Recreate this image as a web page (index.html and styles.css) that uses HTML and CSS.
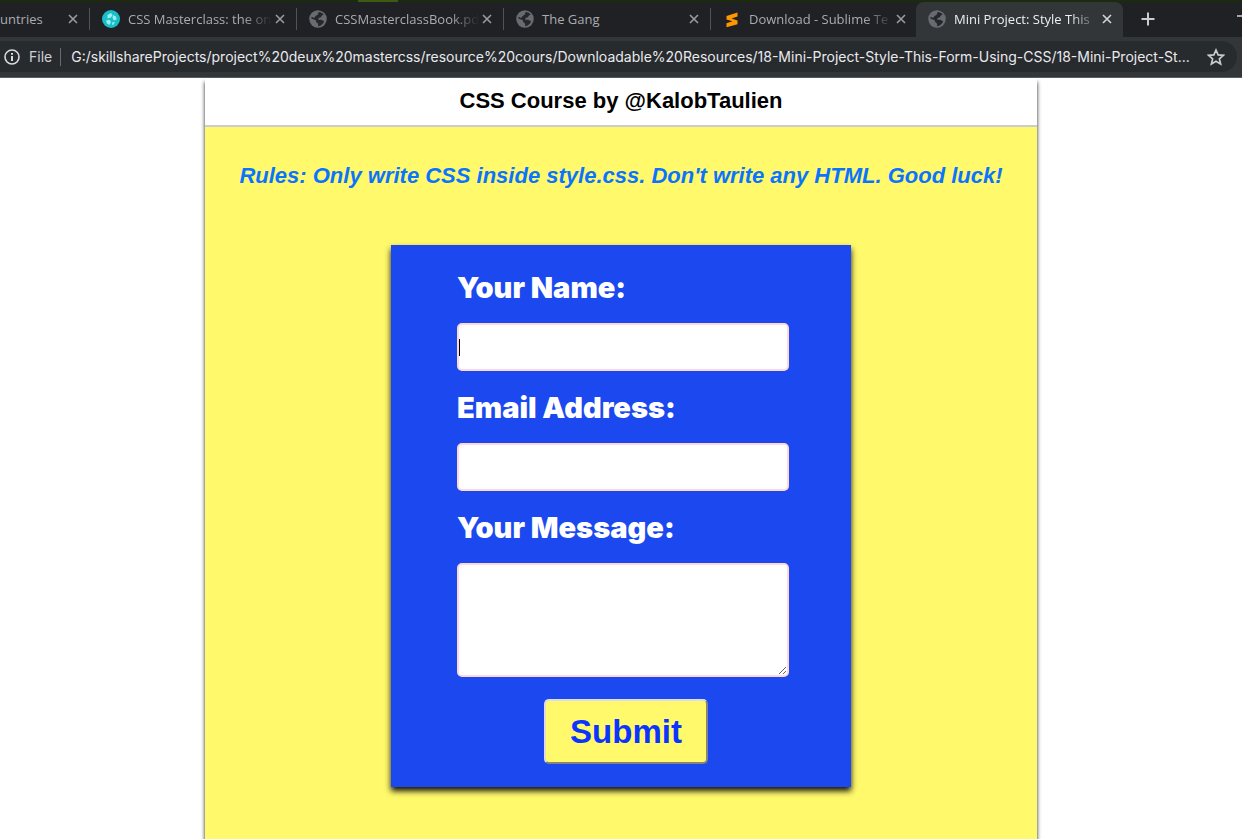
FILE: index.html
```html
<!DOCTYPE html>
<html lang="en">
<head>
    <meta charset="utf-8">
    <title>Mini Project: Style This Form</title>
    <link rel="stylesheet" href="styles.css">
</head>
<body>
    <!-- shared icons -->
    <svg class="defs" width="0" height="0" aria-hidden="true">
        <symbol id="globe" viewBox="0 0 16 16">
            <circle cx="8" cy="8" r="7.8" fill="#686c70"/>
            <path d="M8.600 1.800C10.500 2 12 2.700 13 4l-1.500.8-1 1.600-2 .6-.3 1.600h2.600l2.600 1.500-.8 1.700-2.200 2-2.400.7.200-2.300-1.700-1.300-.5-1.700-3.900-1.700.2-1.500L4.500 7l1.400-1.700 1.800-1z" fill="#25272b"/>
        </symbol>
        <symbol id="close" viewBox="0 0 10 10">
            <path d="M1 1l8 8M9 1l-8 8" fill="none" stroke="currentColor" stroke-width="1.600"/>
        </symbol>
    </svg>

    <div class="browser">
        <div class="desktop"><span class="desktop-bit"></span></div>
        <div class="tabs">
            <div class="tab tab-first">
                <span class="tab-title">untries</span>
                <button class="tab-close" aria-label="Close tab"><svg><use href="#close"/></svg></button>
            </div>
            <div class="tab">
                <svg class="favicon" viewBox="0 0 18 18">
                    <circle cx="9" cy="9" r="9" fill="#18bfc9"/>
                    <path d="M5.500 5L9 3l1.500 2L9 7.500 5.500 8.500zM11 5l3 1.500.5 3-2.500 1-1.500-2.500zM4 10.500l3.500-.8L9 12l-1.500 3-2.500-1.500zM10.500 12l2.500.5-1.500 2-1.500.5z" fill="#9aeef0"/>
                </svg>
                <span class="tab-title fade">CSS Masterclass: the on</span>
                <button class="tab-close" aria-label="Close tab"><svg><use href="#close"/></svg></button>
            </div>
            <div class="tab">
                <svg class="favicon"><use href="#globe"/></svg>
                <span class="tab-title fade">CSSMasterclassBook.pd</span>
                <button class="tab-close" aria-label="Close tab"><svg><use href="#close"/></svg></button>
            </div>
            <div class="tab">
                <svg class="favicon"><use href="#globe"/></svg>
                <span class="tab-title">The Gang</span>
                <button class="tab-close" aria-label="Close tab"><svg><use href="#close"/></svg></button>
            </div>
            <div class="tab tab-last">
                <svg class="favicon" viewBox="0 0 18 18">
                    <path d="M3.500 6L14.500 2.500v4L8.500 8.400l6 2v3.800L3.500 17.200v-4l6-1.900-6-1.800z" fill="#ff9800"/>
                </svg>
                <span class="tab-title fade">Download - Sublime Te</span>
                <button class="tab-close" aria-label="Close tab"><svg><use href="#close"/></svg></button>
            </div>
            <div class="tab tab-active">
                <svg class="favicon"><use href="#globe"/></svg>
                <span class="tab-title fade">Mini Project: Style This</span>
                <button class="tab-close" aria-label="Close tab"><svg><use href="#close"/></svg></button>
            </div>
            <button class="new-tab" aria-label="New tab">
                <svg viewBox="0 0 14 14"><path d="M7 .5v13M.5 7h13" stroke="#c9ccd0" stroke-width="2"/></svg>
            </button>
            <button class="minimize" aria-label="Minimize"></button>
        </div>
        <div class="toolbar">
            <div class="omnibox">
                <svg class="info" viewBox="0 0 16 16">
                    <circle cx="8" cy="8" r="7" fill="none" stroke="#d8dadd" stroke-width="1.600"/>
                    <path d="M8 7v5M8 4v1.800" stroke="#d8dadd" stroke-width="2"/>
                </svg>
                <span class="scheme">File</span>
                <span class="url">G:/skillshareProjects/project%20deux%20mastercss/resource%20cours/Downloadable%20Resources/18-Mini-Project-Style-This-Form-Using-CSS/18-Mini-Project-St...</span>
                <button class="star" aria-label="Bookmark this page">
                    <svg viewBox="0 0 16 16"><path d="M8 1.800l1.900 4.300 4.600.4-3.500 3.100 1.100 4.600L8 11.700l-4.100 2.500L5 9.600 1.500 6.500l4.600-.4z" fill="none" stroke="#c8cbce" stroke-width="1.500"/></svg>
                </button>
            </div>
        </div>

        <main class="container">
            <h1>CSS Course by @KalobTaulien</h1>
            <p class="rules">Rules: Only write CSS inside style.css. Don't write any HTML. Good luck!</p>
            <form class="card">
                <label for="name">Your Name:</label>
                <div class="field">
                    <input type="text" id="name">
                    <span class="caret"></span>
                </div>
                <label for="email">Email Address:</label>
                <div class="field">
                    <input type="email" id="email">
                </div>
                <label for="message">Your Message:</label>
                <textarea id="message"></textarea>
                <button type="submit" class="submit">Submit</button>
            </form>
        </main>
    </div>
</body>
</html>
```

FILE: styles.css
```css
* {
    box-sizing: border-box;
}

body {
    margin: 0;
    background: #fff;
    font-family: "Liberation Sans", Arial, sans-serif;
}

button {
    padding: 0;
    border: none;
    background: none;
    cursor: pointer;
}

.defs {
    position: absolute;
}

.browser {
    display: flex;
    flex-direction: column;
    min-height: 100vh;
}

/* browser chrome */
.desktop {
    display: flex;
    height: 2px;
    background: #1c2b0d;
}

.desktop-bit {
    width: 40px;
    margin-left: 358px;
    background: #3b5c10;
}

.tabs {
    display: flex;
    align-items: flex-start;
    height: 35px;
    background: #202124;
    font-family: "Open Sans", "Noto Sans", sans-serif;
    font-size: 13px;
    line-height: 20px;
    color: #a9acb0;
}

.tab {
    display: flex;
    flex: 0 1 207px;
    align-items: center;
    height: 22px;
    min-width: 0;
    margin-top: 6px;
    padding: 0 11px 0 12px;
    border-right: 1px solid #505357;
}

.tab-first {
    flex-basis: 90px;
    padding-left: 0;
}

.tab-last {
    border-right-color: transparent;
}

.tab-active {
    height: 35px;
    margin: 0 0 0 -2px;
    padding-bottom: 1px;
    border: none;
    border-radius: 8px 8px 0 0;
    background: #323639;
    color: #eceef0;
}

.favicon {
    flex: none;
    width: 18px;
    height: 18px;
    margin-right: 8px;
}

.tab-title {
    flex: 1;
    white-space: nowrap;
}

.fade {
    -webkit-mask-image: linear-gradient(to right, #000 80%, transparent);
    mask-image: linear-gradient(to right, #000 80%, transparent);
}

.tab-close {
    display: flex;
    margin-left: 3px;
    color: #999c9f;
}

.tab-active .tab-close {
    color: #d5d7d9;
}

.tab-close svg {
    width: 10px;
    height: 10px;
}

.new-tab {
    display: flex;
    margin: 10px 0 0 18px;
}

.new-tab svg {
    width: 14px;
    height: 14px;
}

.minimize {
    width: 5px;
    height: 2px;
    margin-left: auto;
    margin-top: 13px;
    background: #a5a8ab;
}

.toolbar {
    padding: 4px 5px 5px 0;
    border-bottom: 1px solid #5a5d60;
    background: #323639;
}

.omnibox {
    display: flex;
    align-items: center;
    height: 31px;
    padding: 0 12px 0 4px;
    border-radius: 0 16px 16px 0;
    background: #282b2e;
    font-family: Inter, "Open Sans", sans-serif;
    font-size: 14px;
    color: #e8eaed;
}

.info {
    flex: none;
    width: 16px;
    height: 16px;
}

.scheme {
    margin-left: 9px;
    padding-right: 8px;
    border-right: 1px solid #686b6e;
    line-height: 18px;
    color: #cfd1d4;
}

.url {
    flex: 1;
    min-width: 0;
    margin-left: 10px;
    white-space: nowrap;
}

.star {
    display: flex;
    margin-left: 12px;
}

.star svg {
    width: 18px;
    height: 18px;
}

/* page */
.container {
    flex: 1;
    width: 67%;
    margin: 0 auto;
    background: #fff96b;
    box-shadow: 0 4px 4px #222;
}

h1 {
    margin: 0;
    padding: 8px 0 10px;
    border-bottom: 2px solid #ccc;
    background: #fff;
    color: #000;
    font-size: 22px;
    line-height: 29px;
    text-align: center;
}

.rules {
    margin: 35px 0 55px;
    color: #0a74ff;
    font-size: 22px;
    font-style: italic;
    font-weight: bold;
    line-height: 28px;
    text-align: center;
}

.card {
    display: flex;
    flex-direction: column;
    width: 460px;
    max-width: 100%;
    margin: 0 auto 52px;
    padding: 24px 62px 23px 66px;
    background: #1c48f0;
    box-shadow: 0 4px 6px #111;
}

.card label {
    margin-bottom: 16px;
    color: #fff;
    font-family: "Arial Black", Inter, sans-serif;
    font-size: 29px;
    font-weight: 900;
    line-height: 38px;
}

.field {
    position: relative;
    display: flex;
    margin-bottom: 18px;
}

.card input,
.card textarea {
    width: 100%;
    height: 48px;
    padding: 0 1px;
    border: 2px solid #ffd9d9;
    border-radius: 5px;
    outline: none;
    background: #fff;
    font-size: 16px;
}

.card textarea {
    height: 114px;
    margin-bottom: 22px;
}

/* text cursor over the first field */
.caret {
    position: absolute;
    top: 16px;
    left: 2px;
    width: 1px;
    height: 17px;
    background: #000;
}

.submit {
    align-self: center;
    margin-left: 6px;
    padding: 0 24px;
    border: 2px solid;
    border-color: #ddd #85857a #85857a #ddd;
    border-radius: 5px;
    background: #fff96b;
    color: #0b35ff;
    font-family: "Liberation Sans", Arial, sans-serif;
    font-size: 33px;
    font-weight: bold;
    line-height: 61px;
}
```
